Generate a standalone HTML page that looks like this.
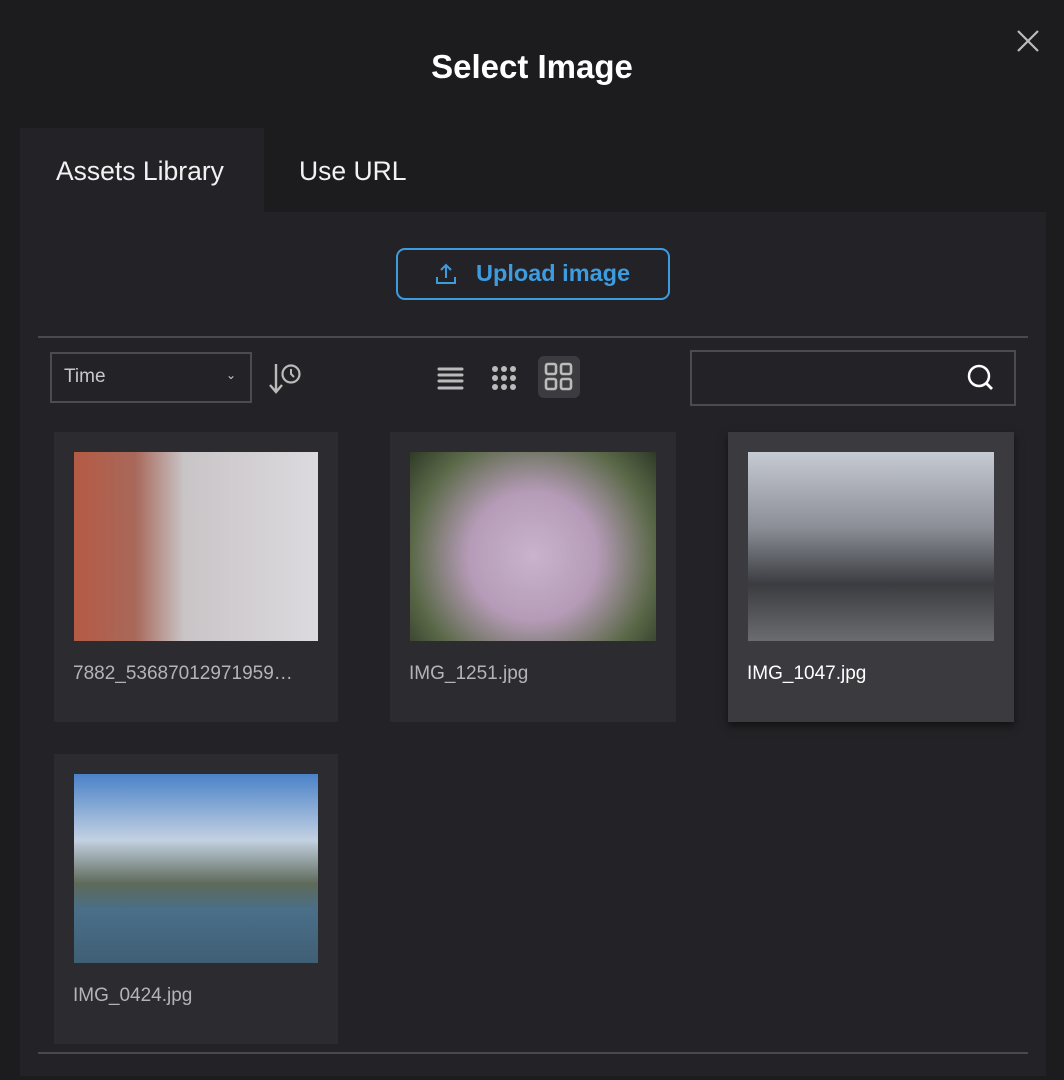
<!DOCTYPE html><html><head><style>
body{margin:0;width:1064px;height:1080px;background:#1c1c1e;font-family:"Liberation Sans",sans-serif;position:relative;overflow:hidden;color:#fff}
.a{position:absolute}
.card{position:absolute;width:284px;height:290px;background:#2b2b30}
.card .img{position:absolute;left:20px;top:20px;width:244px;height:189px}
.card .t{position:absolute;left:19px;top:231px;font-size:19px;color:#b4b4b8;white-space:nowrap}
</style></head><body>
<div class="a" style="left:0;top:48px;width:1064px;text-align:center;font-size:33px;font-weight:bold">Select Image</div>
<svg class="a" style="left:1016px;top:29px" width="24" height="24"><path d="M2 2L22 22M22 2L2 22" stroke="#bbb" stroke-width="2.2"/></svg>
<div class="a" style="left:20px;top:128px;width:244px;height:84px;background:#232327"></div>
<div class="a" style="left:56px;top:156px;font-size:26.5px;color:#f2f2f2">Assets Library</div>
<div class="a" style="left:299px;top:156px;font-size:26.5px;color:#f2f2f2">Use URL</div>
<div class="a" style="left:20px;top:212px;width:1026px;height:864px;background:#232327"></div>
<div class="a" style="left:396px;top:248px;width:270px;height:48px;border:2px solid #3d9ce0;border-radius:9px"></div>
<svg class="a" style="left:434px;top:262px" width="24" height="24"><path d="M12 16V3M7 8l5-5 5 5M3 15v6h18v-6" stroke="#3d9ce0" stroke-width="2" fill="none"/></svg>
<div class="a" style="left:476px;top:260px;font-size:23.5px;font-weight:bold;color:#3d9ce0">Upload image</div>
<div class="a" style="left:38px;top:336px;width:990px;height:2px;background:#4a4a4e"></div>
<div class="a" style="left:50px;top:352px;width:198px;height:47px;border:2px solid #4c4c50"></div>
<div class="a" style="left:64px;top:366px;font-size:19px;color:#c8c8cc">Time</div>
<div class="a" style="left:226px;top:368px;font-size:12px;color:#ccc">&#8964;</div>
<svg class="a" style="left:268px;top:360px" width="38" height="34"><path d="M8 4v27M2 25l6 7 6-7" stroke="#bbb" stroke-width="2.4" fill="none"/><circle cx="23" cy="14" r="8.5" stroke="#bbb" stroke-width="2.2" fill="none"/><path d="M23 9v5l3 3" stroke="#bbb" stroke-width="2" fill="none"/></svg>
<svg class="a" style="left:436px;top:364px" width="30" height="28"><g stroke="#bbb" stroke-width="3" stroke-linecap="round"><path d="M3 5h23M3 11h23M3 17h23M3 24h23"/></g></svg>
<svg class="a" style="left:490px;top:364px" width="28" height="28" fill="#bbb"><circle cx="5" cy="5" r="3"/><circle cx="14" cy="5" r="3"/><circle cx="23" cy="5" r="3"/><circle cx="5" cy="14" r="3"/><circle cx="14" cy="14" r="3"/><circle cx="23" cy="14" r="3"/><circle cx="5" cy="23" r="3"/><circle cx="14" cy="23" r="3"/><circle cx="23" cy="23" r="3"/></svg>
<div class="a" style="left:538px;top:356px;width:42px;height:42px;background:#3c3c40;border-radius:6px"></div>
<svg class="a" style="left:544px;top:362px" width="30" height="30"><g stroke="#bbb" stroke-width="2.6" fill="none"><rect x="2" y="2" width="10" height="10" rx="2"/><rect x="17" y="2" width="10" height="10" rx="2"/><rect x="2" y="17" width="10" height="10" rx="2"/><rect x="17" y="17" width="10" height="10" rx="2"/></g></svg>
<div class="a" style="left:690px;top:350px;width:322px;height:52px;border:2px solid #4c4c50"></div>
<svg class="a" style="left:966px;top:363px" width="30" height="30"><circle cx="13" cy="13" r="10" stroke="#fff" stroke-width="2.5" fill="none"/><path d="M20 20l6 6" stroke="#fff" stroke-width="2.8"/></svg>

<div class="card" style="left:54px;top:432px"><div class="img" style="background:linear-gradient(90deg,#b55a44 0%,#a8685a 25%,#c9c4c6 45%,#dcdadf 100%)"></div><div class="t">7882_53687012971959…</div></div>
<div class="card" style="left:390px;top:432px;width:286px"><div class="img" style="width:246px;background:radial-gradient(circle at 50% 55%,#c9b4cc 0,#b59bb7 40%,#5c6a4a 75%,#2f3a26 100%)"></div><div class="t">IMG_1251.jpg</div></div>
<div class="card" style="left:728px;top:432px;width:286px;background:#3a3a3f;box-shadow:0 4px 8px rgba(0,0,0,.5)"><div class="img" style="width:246px;background:linear-gradient(180deg,#c6cad2 0%,#8b8e96 40%,#3a3c40 70%,#6b6c70 100%)"></div><div class="t" style="color:#fff">IMG_1047.jpg</div></div>
<div class="card" style="left:54px;top:754px"><div class="img" style="background:linear-gradient(180deg,#4a82c8 0%,#c3d1e2 35%,#5e6a5a 58%,#4a6f88 72%,#3f5f75 100%)"></div><div class="t">IMG_0424.jpg</div></div>
<div class="a" style="left:38px;top:1052px;width:990px;height:2px;background:#4a4a4e"></div>
</body></html>
